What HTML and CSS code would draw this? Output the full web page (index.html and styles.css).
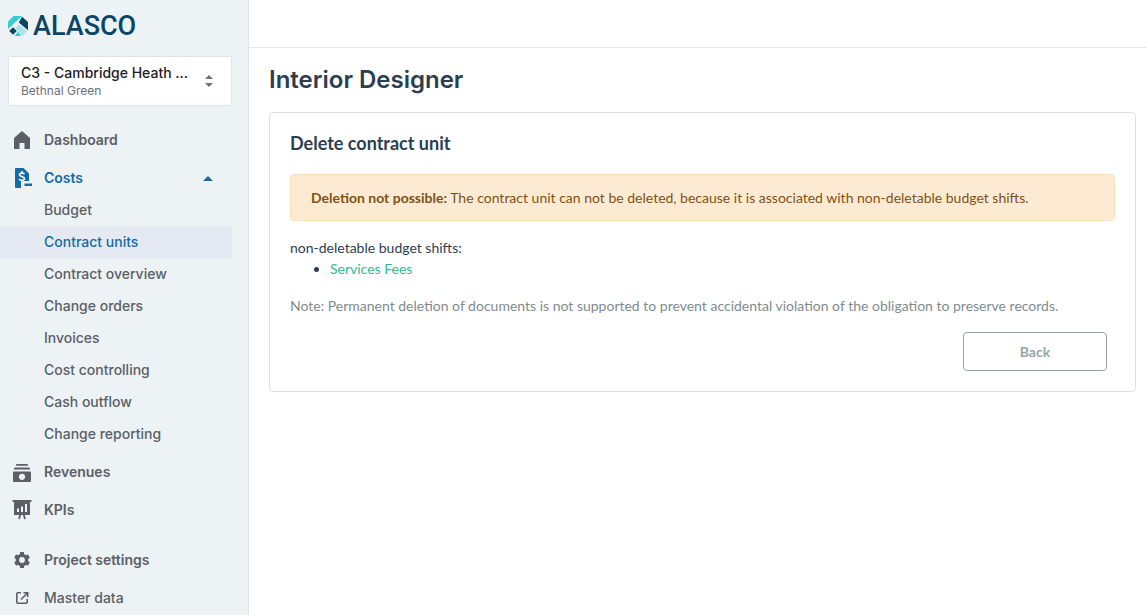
FILE: index.html
```html
<!DOCTYPE html>
<html lang="en">
<head>
<meta charset="UTF-8" />
<meta name="viewport" content="width=device-width, initial-scale=1" />
<title>Interior Designer - Alasco</title>
<link rel="stylesheet" href="styles.css">
</head>
<body>
<aside class="sidebar">
  <a href="#" class="logo">
    <svg width="20" height="20" viewBox="0 0 20 20" aria-hidden="true">
      <path fill="#35cdd4" d="M5.500 0H14L0 13V5.500z" />
      <path fill="#0b4566" d="M14 .7l6 5.300v8.300L10.800 6.500z" />
      <path fill="#a3e8ea" d="M11.200 8.800l7.800 6.400-4.500 4.800L7 11.700z" />
      <path fill="#0b4566" d="M5 11.200l3.800 3.800L5 18.800 1.200 15z" />
      <path fill="#35cdd4" d="M10 15.800l3.300 4.200H6.500z" />
    </svg>
    <span>ALASCO</span>
  </a>

  <button type="button" class="project-select">
    <span class="project-text">
      <span class="project-name">C3 - Cambridge Heath ...</span>
      <span class="project-place">Bethnal Green</span>
    </span>
    <svg width="8" height="12" viewBox="0 0 8 12" fill="#6b7177" aria-hidden="true"><path d="M0 4l4-4 4 4zM0 8h8l-4 4z" /></svg>
  </button>

  <nav class="nav">
    <a href="#" class="nav-item">
      <svg width="20" height="20" viewBox="0 0 20 20" fill="currentColor" aria-hidden="true"><path d="M10 1l8 7v11h-5.500v-6h-5v6H2V8z" /></svg>
      Dashboard
    </a>
    <a href="#" class="nav-item open">
      <svg width="20" height="20" viewBox="0 0 20 20" aria-hidden="true">
        <path fill="currentColor" d="M4 0h7.500L17 5.500V13h-6v7H4a1 1 0 0 1-1-1V1a1 1 0 0 1 1-1z" />
        <path fill="none" stroke="#edf2f5" stroke-width="1.700" d="M12.500 6c-1-1.200-5-1.300-5 .8 0 2.200 5 1.400 5 3.800 0 2.200-4 2.200-5.500.6M10 3v2M10 12.500V15" />
        <path fill="#edf2f5" d="M9 14h3v6H9z" />
        <path fill="currentColor" d="M12.500 15.500H20V18h-7.500z" />
      </svg>
      Costs
      <svg class="caret" width="10" height="5" viewBox="0 0 10 5" fill="currentColor" aria-hidden="true"><path d="M0 5l5-5 5 5z" /></svg>
    </a>
    <div class="subnav">
      <a href="#">Budget</a>
      <a href="#" class="active">Contract units</a>
      <a href="#">Contract overview</a>
      <a href="#">Change orders</a>
      <a href="#">Invoices</a>
      <a href="#">Cost controlling</a>
      <a href="#">Cash outflow</a>
      <a href="#">Change reporting</a>
    </div>
    <a href="#" class="nav-item">
      <svg width="20" height="20" viewBox="0 0 20 20" fill="currentColor" aria-hidden="true">
        <path d="M5 2h10a1 1 0 0 1 1 1v.7H4V3a1 1 0 0 1 1-1zM3 5.500h14a1 1 0 0 1 1 1v1H2v-1a1 1 0 0 1 1-1z" />
        <path fill-rule="evenodd" d="M2 9.500h16a1 1 0 0 1 1 1V19a1 1 0 0 1-1 1H2a1 1 0 0 1-1-1v-8.500a1 1 0 0 1 1-1zM10 11.700a3.100 3.100 0 1 0 0 6.200 3.100 3.100 0 0 0 0-6.200z" />
      </svg>
      Revenues
    </a>
    <a href="#" class="nav-item">
      <svg width="20" height="20" viewBox="0 0 20 20" aria-hidden="true">
        <path fill="currentColor" d="M1 0h18a.5.5 0 0 1 .5.500V2H18v13H2V2H.5V.5A.5.500 0 0 1 1 0z" />
        <path fill="none" stroke="#edf2f5" stroke-width="2" d="M6 8.500V12M10 6.500V12M14 4v8" />
        <path fill="none" stroke="currentColor" stroke-width="1.800" d="M8.200 15l-1.200 4M11.800 15l1.200 4" />
      </svg>
      KPIs
    </a>
    <a href="#" class="nav-item settings">
      <svg width="20" height="20" viewBox="0 0 20 20" aria-hidden="true">
        <circle cx="10" cy="10" r="4.600" fill="none" stroke="currentColor" stroke-width="3.400" />
        <path fill="none" stroke="currentColor" stroke-width="4" d="M10 2v3M10 15v3M3.100 6l2.600 1.500M14.300 12.500l2.600 1.500M3.100 14l2.600-1.500M14.300 7.500L16.900 6" />
      </svg>
      Project settings
    </a>
    <a href="#" class="nav-item light">
      <svg width="20" height="20" viewBox="0 0 20 20" fill="none" stroke="currentColor" stroke-width="1.600" aria-hidden="true"><path d="M9 4.800H5.800a1 1 0 0 0-1 1v8.400a1 1 0 0 0 1 1h8.400a1 1 0 0 0 1-1V11M11.500 4.800h4.200V9M15.500 5L9 11.500" /></svg>
      Master data
    </a>
  </nav>
</aside>

<div class="page">
  <header class="topbar"></header>
  <main class="content">
    <h1>Interior Designer</h1>
    <section class="card">
      <h2>Delete contract unit</h2>
      <p class="alert"><strong>Deletion not possible:</strong> The contract unit can not be deleted, because it is associated with non-deletable budget shifts.</p>
      <p>non-deletable budget shifts:</p>
      <ul>
        <li><a href="#">Services Fees</a></li>
      </ul>
      <p class="note">Note: Permanent deletion of documents is not supported to prevent accidental violation of the obligation to preserve records.</p>
      <div class="actions">
        <button type="button" class="back">Back</button>
      </div>
    </section>
  </main>
</div>
</body>
</html>
```
FILE: styles.css
```css
* {
  box-sizing: border-box;
}
body {
  margin: 0;
  display: flex;
  min-height: 100vh;
  font-family: Lato, sans-serif;
  font-size: 14px;
  line-height: 21px;
  color: #2c3e50;
  background-color: #fff;
}
a {
  text-decoration: none;
}
h1, h2, p, ul {
  margin: 0;
}

/* sidebar */
.sidebar {
  flex: none;
  width: 249px;
  padding: 12px 16px 0 0;
  border-right: 1px solid #dfe4e8;
  background-color: #edf2f5;
  font-family: Inter, sans-serif;
}
.logo {
  display: flex;
  align-items: center;
  gap: 5px;
  height: 28px;
  margin-left: 8px;
  color: #0b4566;
  font-family: Roboto, sans-serif;
  font-size: 27px;
  font-weight: 500;
  line-height: 28px;
}
.project-select {
  display: flex;
  align-items: center;
  justify-content: space-between;
  width: 224px;
  height: 50px;
  margin: 16px 0 18px 8px;
  padding: 0 18px 0 12px;
  border: 1px solid #dfe4e8;
  border-radius: 2px;
  background-color: #fff;
  font-family: inherit;
  text-align: left;
  cursor: pointer;
}
.project-name,
.project-place {
  display: block;
  white-space: nowrap;
}
.project-name {
  color: #1d2125;
  font-size: 14px;
  font-weight: 500;
  line-height: 18px;
}
.project-place {
  color: #6b7177;
  font-size: 12px;
  line-height: 17px;
}
.nav {
  display: flex;
  flex-direction: column;
  gap: 6px;
}
.nav-item {
  display: flex;
  align-items: center;
  gap: 12px;
  height: 32px;
  padding: 0 19px 0 12px;
  color: #5a6065;
  font-weight: 600;
  line-height: 20px;
}
.nav-item.open {
  color: #146ba5;
  margin-bottom: -6px;
}
.nav-item.settings {
  margin-top: 12px;
}
.nav-item.light {
  font-weight: 500;
}
.caret {
  margin-left: auto;
}
.subnav a {
  display: block;
  padding-left: 44px;
  border-radius: 0 2px 2px 0;
  color: #5a6065;
  font-weight: 500;
  line-height: 32px;
}
.subnav .active {
  background-color: #e5eaf2;
  color: #146ba5;
}

/* page */
.page {
  flex: 1;
  min-width: 0;
}
.topbar {
  height: 48px;
  border-bottom: 1px solid #e3e6e9;
}
.content {
  padding: 16px 10px 20px 20px;
}
h1 {
  margin-bottom: 16px;
  font-family: Inter, sans-serif;
  font-size: 24px;
  font-weight: 600;
  line-height: 32px;
}
.card {
  padding: 20px;
  border: 1px solid #dee0e6;
  border-radius: 4px;
}
h2 {
  margin-bottom: 20px;
  font-size: 18px;
  font-weight: 700;
  line-height: 21px;
}
.alert {
  margin-bottom: 16px;
  padding: 12px 20px;
  border: 1px solid #fbdfb9;
  border-radius: 4px;
  background-color: #fdead3;
  color: #7f5213;
}
ul {
  margin-bottom: 16px;
  padding-left: 40px;
}
li a {
  color: #2bbf94;
}
.note {
  color: #7f8c8d;
}
.actions {
  display: flex;
  justify-content: flex-end;
  padding: 16px 8px 0 0;
}
.back {
  width: 144px;
  height: 39px;
  border: 1px solid #95a5a6;
  border-radius: 4px;
  background-color: #fff;
  color: #95a5a6;
  font-family: inherit;
  font-size: 14px;
  font-weight: 700;
  cursor: pointer;
}
```
